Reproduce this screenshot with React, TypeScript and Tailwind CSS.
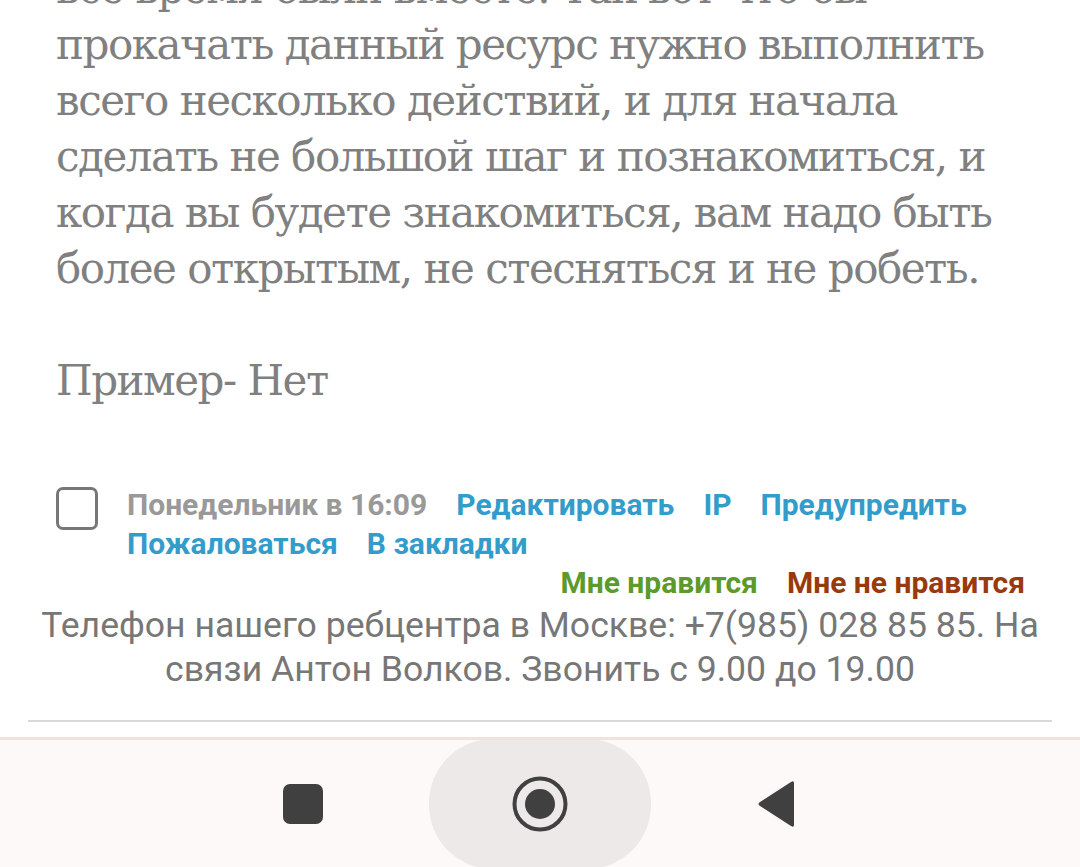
import React from 'react';

const bodyLines = [
  'все время были вместе. Так вот что бы',
  'прокачать данный ресурс нужно выполнить',
  'всего несколько действий, и для начала',
  'сделать не большой шаг и познакомиться, и',
  'когда вы будете знакомиться, вам надо быть',
  'более открытым, не стесняться и не робеть.',
];

const serif = { fontFamily: '"DejaVu Serif", "Liberation Serif", serif' };
const sans = { fontFamily: 'Roboto, "Noto Sans", sans-serif' };

export default function App() {
  return (
    <div className="w-[1080px] h-[867px] overflow-hidden bg-white flex flex-col">
      <main className="flex-1 overflow-hidden">
        {/* Post body */}
        <div
          className="pl-[56px] mt-[-39px] text-[42px] leading-[56px] text-[#808080] tracking-[-1.5px]"
          style={serif}
        >
          {bodyLines.map((l) => (
            <div key={l} className="whitespace-nowrap">{l}</div>
          ))}
          <div className="h-[56px]" />
          <div>Пример- Нет</div>
        </div>

        {/* Post meta */}
        <div className="mt-[76px] flex pl-[56px] pr-[40px]" style={sans}>
          <div className="w-[42px] h-[43px] border-[3px] border-[#777] rounded-[7px] shrink-0 mt-[2px]" />
          <div className="ml-[29px] text-[30px] leading-[39px] font-bold">
            <div className="flex gap-[29px] whitespace-nowrap">
              <span className="text-[#999]">Понедельник в 16:09</span>
              <span className="text-[#339ccb]">Редактировать</span>
              <span className="text-[#339ccb]">IP</span>
              <span className="text-[#339ccb]">Предупредить</span>
            </div>
            <div className="flex gap-[29px] whitespace-nowrap">
              <span className="text-[#339ccb]">Пожаловаться</span>
              <span className="text-[#339ccb]">В закладки</span>
            </div>
          </div>
        </div>
        <div className="flex justify-end gap-[29px] pr-[55px] text-[30px] leading-[39px] font-bold" style={sans}>
          <span className="text-[#5b9a2b]">Мне нравится</span>
          <span className="text-[#993a0c]">Мне не нравится</span>
        </div>

        {/* Footer contact */}
        <div className="mt-[1px] text-center text-[35.6px] leading-[44px] text-[#777] px-[20px]" style={sans}>
          <div className="whitespace-nowrap">Телефон нашего ребцентра в Москве: +7(985) 028 85 85. На</div>
          <div className="whitespace-nowrap">связи Антон Волков. Звонить с 9.00 до 19.00</div>
        </div>
        <div className="mx-[28px] mt-[29px] h-[2px] bg-[#d9d9d9]" />
      </main>

      {/* System navigation bar */}
      <nav className="h-[130px] shrink-0 bg-[#fdf9f8] border-t-[3px] border-[#f0e2dc] flex items-center justify-center relative overflow-hidden">
        <div className="absolute left-[66px] right-[66px] top-[-3px] h-[2px] bg-[#dccbc3]" />
        <div className="flex items-center gap-[106px]">
          <div className="w-[40px] h-[40px] rounded-[7px] bg-[#404040]" />
          <div className="w-[222px] h-[130px] rounded-[64px] bg-[#ece9e8] flex items-center justify-center">
            <svg width="58" height="58" viewBox="0 0 58 58">
              <circle cx="29" cy="29" r="25.5" fill="none" stroke="#404040" strokeWidth="4" />
              <circle cx="29" cy="29" r="15" fill="#404040" />
            </svg>
          </div>
          <svg width="40" height="48" viewBox="0 0 40 48">
            <path d="M37 3 L37 45 Q37 48 34 46 L3 26 Q0 24 3 22 L34 2 Q37 0 37 3 Z" fill="#404040" />
          </svg>
        </div>
      </nav>
    </div>
  );
}
